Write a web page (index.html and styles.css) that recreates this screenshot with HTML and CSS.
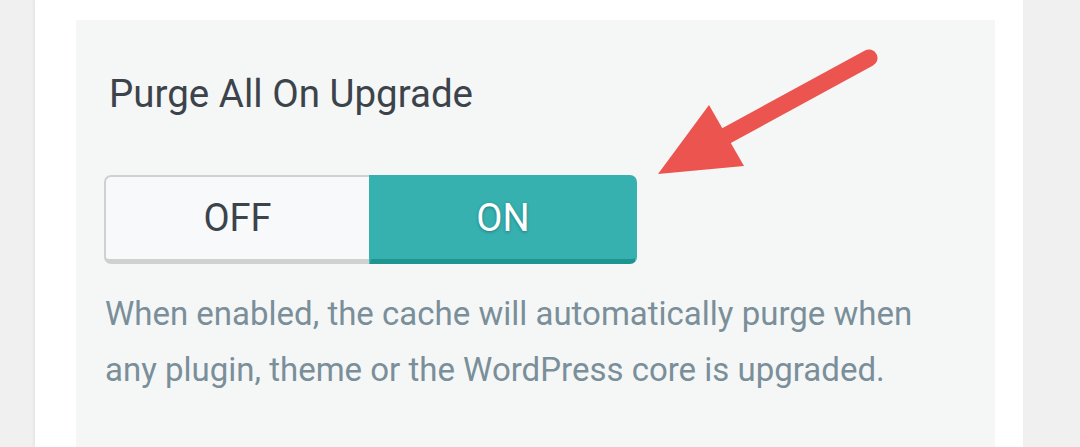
FILE: index.html
```html
<!DOCTYPE html>
<html lang="en">
<head>
  <meta charset="UTF-8">
  <meta name="viewport" content="width=device-width, initial-scale=1.0">
  <title>Purge All On Upgrade</title>
  <link rel="stylesheet" href="styles.css">
</head>
<body>
  <div class="card">
    <div class="panel">
      <h2 class="setting-title">Purge All On Upgrade</h2>

      <div class="toggle">
        <button class="toggle-btn off">OFF</button>
        <button class="toggle-btn on active">ON</button>
      </div>

      <p class="setting-desc">When enabled, the cache will automatically purge when any plugin, theme or the WordPress core is upgraded.</p>

      <svg class="arrow" width="240" height="140" viewBox="0 0 240 140">
        <line x1="219" y1="18" x2="74" y2="97" stroke="#ec5450" stroke-width="17" stroke-linecap="round"/>
        <polygon points="8,134 59,65 94,126" fill="#ec5450"/>
      </svg>
    </div>
  </div>
</body>
</html>
```

FILE: styles.css
```css
body {
  margin: 0;
  background: #f0f0f0;
  font-family: Roboto, "Noto Sans", sans-serif;
}
.card {
  margin-left: 35px;
  width: 988px;
  min-height: 447px;
  box-sizing: border-box;
  background: #fff;
  padding: 20px 28px 0 41px;
  box-shadow: -2px 0 2px rgba(0, 0, 0, 0.04);
}
.panel {
  position: relative;
  background: #f5f7f7;
  min-height: 427px;
  box-sizing: border-box;
  padding: 51px 28px 0 28px;
}
.setting-title {
  margin: 0 0 58px 5px;
  font-size: 38.5px;
  font-weight: 400;
  line-height: 1.2;
  color: #3c434a;
}
.toggle {
  display: flex;
  width: 533px;
}
.toggle-btn {
  font-family: inherit;
  font-size: 38px;
  height: 89px;
  display: flex;
  align-items: center;
  justify-content: center;
  padding: 0;
  box-sizing: border-box;
  cursor: pointer;
}
.toggle-btn.off {
  width: 265px;
  background: #f8f9fb;
  color: #3c434a;
  border: 2px solid #d0d0d0;
  border-bottom-width: 5px;
  border-right: none;
  border-radius: 7px 0 0 7px;
}
.toggle-btn.on {
  width: 268px;
  background: #37b0b0;
  color: #fff;
  border: 2px solid #37b0b0;
  border-bottom: 5px solid #1e9590;
  border-radius: 0 7px 7px 0;
  text-shadow: 0 1px 3px rgba(0, 60, 60, 0.45);
}
.setting-desc {
  margin: 22px 0 0 1px;
  max-width: 830px;
  font-size: 33px;
  line-height: 56px;
  color: #7a8f99;
}
.arrow {
  position: absolute;
  left: 574px;
  top: 20px;
}
```
